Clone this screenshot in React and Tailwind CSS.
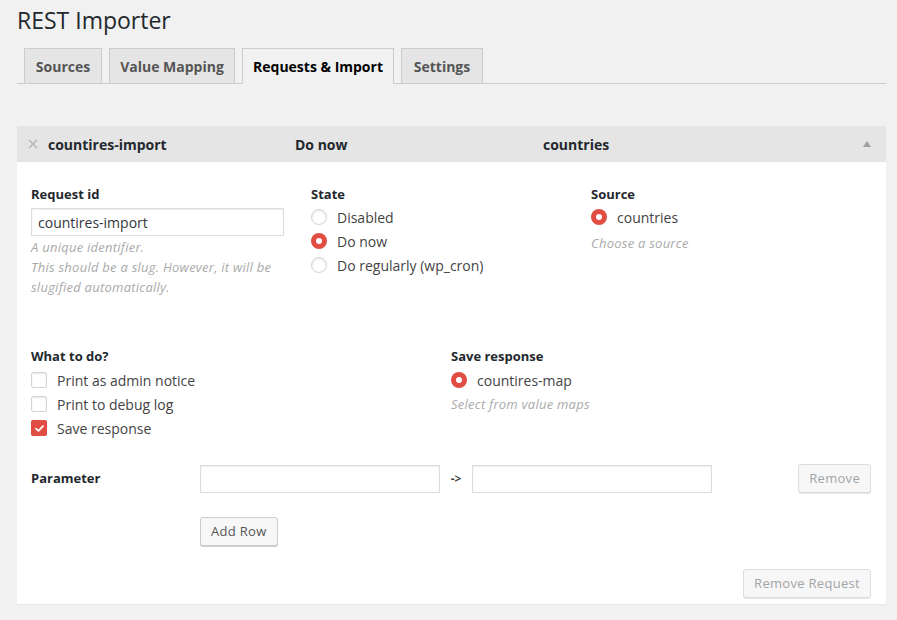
import React from "react";

const font = { fontFamily: '"Open Sans", "Noto Sans", sans-serif' };

function Radio({ checked }) {
  return checked ? (
    <span className="w-4 h-4 rounded-full bg-[#e14d43] flex items-center justify-center shrink-0">
      <span className="w-[6px] h-[6px] rounded-full bg-white" />
    </span>
  ) : (
    <span className="w-4 h-4 rounded-full bg-white border border-[#d4d4d4] shadow-[inset_0_1px_2px_rgba(0,0,0,0.1)] shrink-0" />
  );
}

function Check({ checked }) {
  return checked ? (
    <span className="w-4 h-4 rounded-[2px] bg-[#e14d43] flex items-center justify-center shrink-0">
      <svg width="11" height="11" viewBox="0 0 12 12">
        <path d="M2.2 6.2 L4.8 8.6 L9.8 3.4" fill="none" stroke="#fff" strokeWidth="2" strokeLinecap="round" strokeLinejoin="round" />
      </svg>
    </span>
  ) : (
    <span className="w-4 h-4 rounded-[2px] bg-white border border-[#d4d4d4] shadow-[inset_0_1px_2px_rgba(0,0,0,0.1)] shrink-0" />
  );
}

function Row({ children }) {
  return <div className="h-6 flex items-center gap-[10px] text-[14px] text-[#444]">{children}</div>;
}

function Label({ children }) {
  return <div className="text-[13px] leading-5 font-bold text-[#23282d] mb-[1px]">{children}</div>;
}

function Help({ children, className = "" }) {
  return (
    <div className={"text-[13px] leading-5 italic tracking-[0.25px] text-[#aaa] " + className}>{children}</div>
  );
}

function Tab({ children, active, w }) {
  return active ? (
    <div className={"h-[36px] flex items-center justify-center border border-[#ccc] border-b-[#f1f1f1] bg-[#f1f1f1] text-[14px] font-bold text-black -mb-px " + w}>
      {children}
    </div>
  ) : (
    <div className={"h-[35px] flex items-center justify-center border border-b-0 border-[#ccc] bg-[#e5e5e5] text-[14px] font-bold text-[#555] " + w}>
      {children}
    </div>
  );
}

function Button({ children, disabled, className = "" }) {
  return (
    <button
      className={
        "h-[29px] px-[10px] rounded-[3px] border text-[13px] tracking-[0.3px] bg-[#f7f7f7] " +
        (disabled
          ? "border-[#ddd] text-[#a0a5aa] shadow-[0_1px_0_#e5e5e5]"
          : "border-[#ccc] text-[#555] shadow-[0_1px_0_#ccc]") +
        " " +
        className
      }
      style={font}
    >
      {children}
    </button>
  );
}

export default function App() {
  return (
    <div className="min-h-screen bg-[#f1f1f1] pl-[17px] pr-[11px] pt-[4px]" style={font}>
      <h1 className="text-[23px] leading-[32px] text-[#23282d] font-normal">REST Importer</h1>
      <div className="mt-[12px] flex items-end pl-[7px] border-b border-[#ccc]">
        <Tab w="w-[78px]">Sources</Tab>
        <Tab w="w-[126px] ml-[7px]">Value Mapping</Tab>
        <Tab active w="w-[152px] ml-[7px]">Requests &amp; Import</Tab>
        <Tab w="w-[82px] ml-[7px]">Settings</Tab>
      </div>

      <div className="mt-[42px] bg-white shadow-[0_1px_1px_rgba(0,0,0,0.04)]">
        <div className="h-[36px] bg-[#e5e5e5] flex items-center text-[14px] font-bold text-[#23282d]">
          <div className="w-[31px] pl-[11px] flex items-center">
            <svg width="10" height="10" viewBox="0 0 10 10">
              <path d="M1 1 L9 9 M9 1 L1 9" stroke="#b4b4b4" strokeWidth="1.4" />
            </svg>
          </div>
          <div className="w-[247px]">countires-import</div>
          <div className="w-[248px]">Do now</div>
          <div className="flex-1">countries</div>
          <svg width="8" height="6" viewBox="0 0 8 6" className="mr-[15px]">
            <path d="M4 0 L8 6 L0 6 Z" fill="#a0a0a0" />
          </svg>
        </div>

        <div className="pl-[14px] pr-[15px] pt-[22px] pb-[6px]">
          <div className="grid grid-cols-3">
            <div>
              <Label>Request id</Label>
              <input
                readOnly
                value="countires-import"
                className="mt-[3px] w-[253px] h-[28px] px-[6px] border border-[#ddd] shadow-[inset_0_1px_2px_rgba(0,0,0,0.07)] text-[14px] text-[#32373c] outline-none"
                style={font}
              />
              <Help className="mt-[1px]">
                A unique identifier.
                <br />
                This should be a slug. However, it will be
                <br />
                slugified automatically.
              </Help>
            </div>
            <div>
              <Label>State</Label>
              <Row><Radio /><span>Disabled</span></Row>
              <Row><Radio checked /><span>Do now</span></Row>
              <Row><Radio /><span>Do regularly (wp_cron)</span></Row>
            </div>
            <div>
              <Label>Source</Label>
              <Row><Radio checked /><span>countries</span></Row>
              <Help className="mt-[4px]">Choose a source</Help>
            </div>
          </div>

          <div className="grid grid-cols-2 mt-[49px]">
            <div>
              <Label>What to do?</Label>
              <div className="mt-[2px]">
                <Row><Check /><span>Print as admin notice</span></Row>
                <Row><Check /><span>Print to debug log</span></Row>
                <Row><Check checked /><span>Save response</span></Row>
              </div>
            </div>
            <div>
              <Label>Save response</Label>
              <div className="mt-[2px]">
                <Row><Radio checked /><span>countires-map</span></Row>
              </div>
              <Help className="mt-[2px]">Select from value maps</Help>
            </div>
          </div>

          <div className="mt-[24px] flex items-center">
            <div className="w-[169px] text-[13px] font-bold text-[#23282d]">Parameter</div>
            <input
              readOnly
              className="w-[240px] h-[28px] border border-[#ddd] shadow-[inset_0_1px_2px_rgba(0,0,0,0.07)] outline-none"
            />
            <div className="w-[32px] text-center text-[12px] font-bold text-[#444]">-&gt;</div>
            <input
              readOnly
              className="w-[240px] h-[28px] border border-[#ddd] shadow-[inset_0_1px_2px_rgba(0,0,0,0.07)] outline-none"
            />
            <div className="flex-1" />
            <Button disabled>Remove</Button>
          </div>

          <div className="mt-[24px] pl-[169px]">
            <Button>Add Row</Button>
          </div>

          <div className="mt-[23px] flex justify-end">
            <Button disabled className="h-[28px]">Remove Request</Button>
          </div>
        </div>
      </div>
    </div>
  );
}
